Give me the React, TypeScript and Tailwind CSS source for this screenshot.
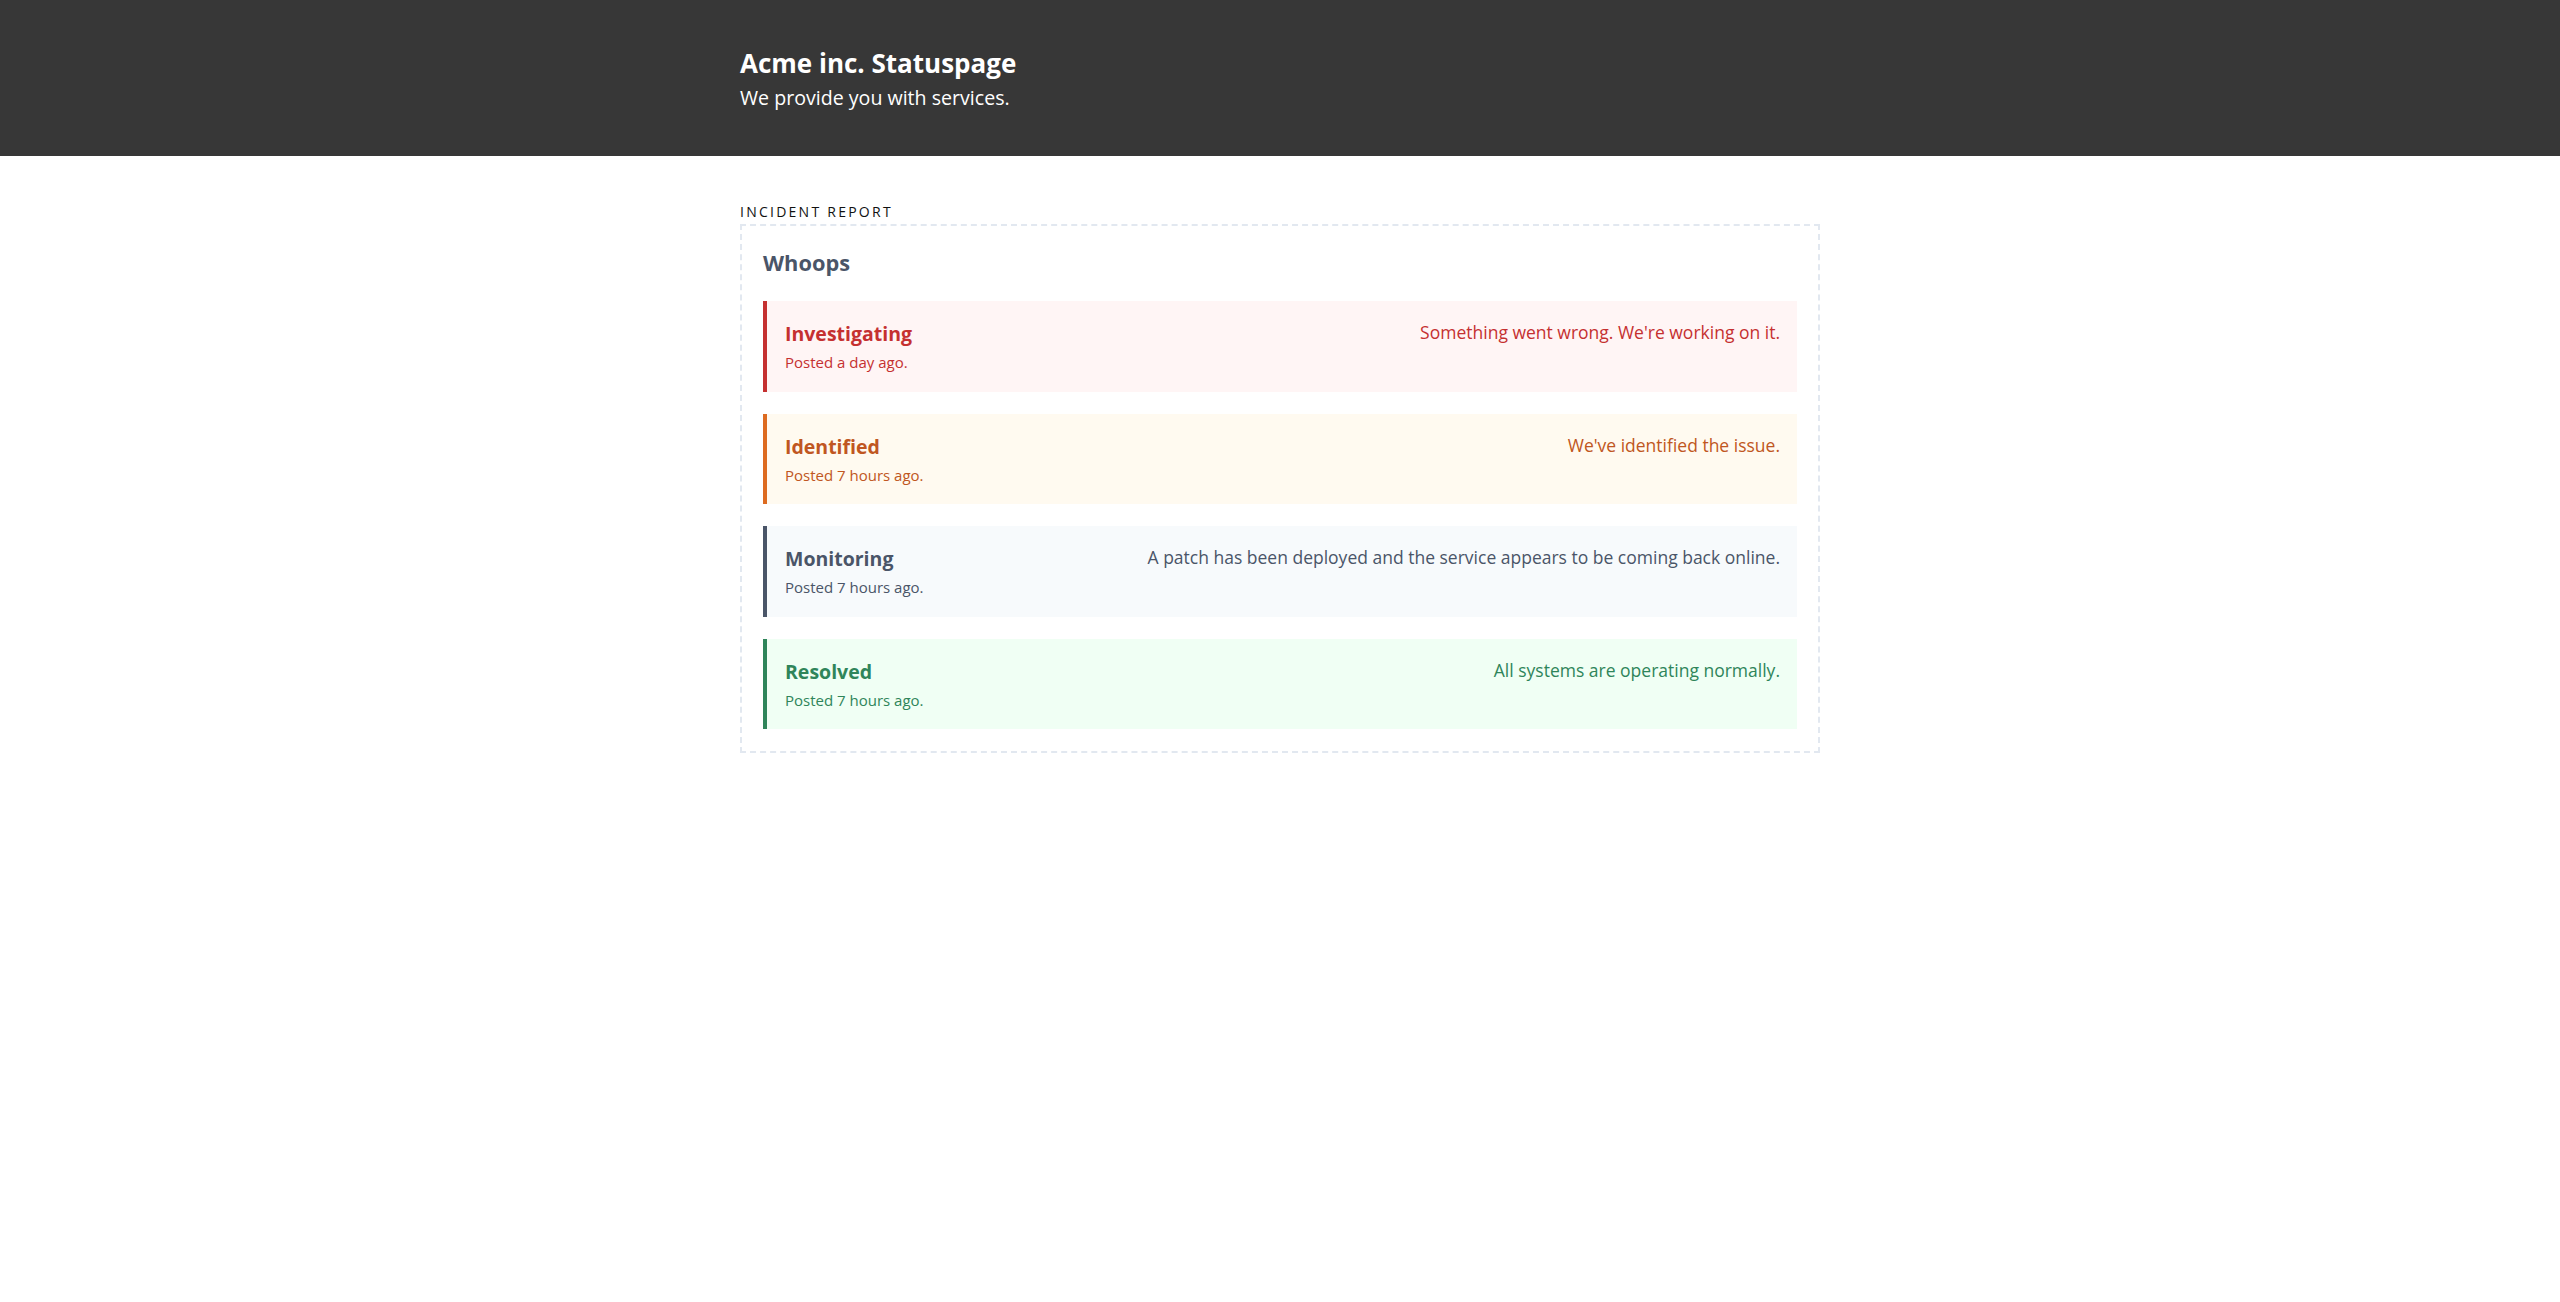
const incidents = [
    {
        title: 'Investigating',
        posted: 'Posted a day ago.',
        message: "Something went wrong. We're working on it.",
        row: 'border-[#c53030] bg-[#fff5f5] text-[#c53030]',
    },
    {
        title: 'Identified',
        posted: 'Posted 7 hours ago.',
        message: "We've identified the issue.",
        row: 'border-[#dd6b20] bg-[#fffaf0] text-[#c05621]',
    },
    {
        title: 'Monitoring',
        posted: 'Posted 7 hours ago.',
        message: 'A patch has been deployed and the service appears to be coming back online.',
        row: 'border-[#4a5568] bg-[#f7fafc] text-[#4a5568]',
    },
    {
        title: 'Resolved',
        posted: 'Posted 7 hours ago.',
        message: 'All systems are operating normally.',
        row: 'border-[#2f855a] bg-[#f0fff4] text-[#2f855a]',
    },
];

const App = () => {
    return (
        <div className="min-h-screen bg-white font-['Open_Sans',sans-serif]">
            {/* Header */}
            <header className="bg-[#373737] pt-[47px] pb-[44px]">
                <div className="mx-auto w-[1080px]">
                    <h1 className="text-[26px] leading-[32px] font-bold text-white">Acme inc. Statuspage</h1>
                    <p className="mt-[5px] text-[19.6px] leading-[28px] text-white">We provide you with services.</p>
                </div>
            </header>

            <main className="mx-auto w-[1080px] pt-[46px]">
                <h2 className="mb-[2px] text-[14px] leading-[20px] tracking-[2.25px] text-[#111111] uppercase">
                    Incident report
                </h2>

                <section className="border-2 border-dashed border-[#e2e8f0] px-[21px] pt-[23px] pb-[22px]">
                    <h3 className="mb-[24px] text-[21.8px] leading-[28px] font-bold text-[#4a5568]">Whoops</h3>

                    <div className="flex flex-col gap-[22px]">
                        {incidents.map((item) => (
                            <div
                                key={item.title}
                                className={`flex items-start justify-between border-l-4 pl-[18px] pr-[17px] pt-[19px] pb-[19.5px] ${item.row}`}
                            >
                                <div>
                                    <div className="text-[19.5px] leading-[28px] font-bold">{item.title}</div>
                                    <div className="mt-[4px] text-[15px] leading-[20px]">{item.posted}</div>
                                </div>
                                <div className="text-right text-[17.5px] leading-[24px]">{item.message}</div>
                            </div>
                        ))}
                    </div>
                </section>
            </main>
        </div>
    );
};

export default App;
